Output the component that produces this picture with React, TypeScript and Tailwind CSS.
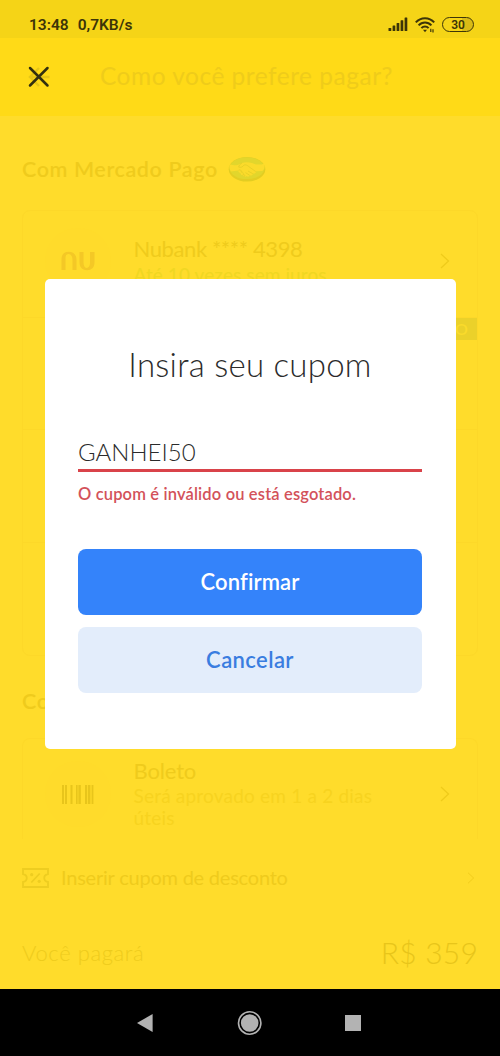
import React from "react";

function Chevron({ className }: { className: string }) {
  return (
    <svg viewBox="0 0 10 16" className={className} fill="none" stroke="currentColor" strokeWidth="1.3">
      <path d="M1 1l7.5 7L1 15" />
    </svg>
  );
}

function StatusBar() {
  return (
    <div className="flex h-[38px] items-center justify-between bg-[#f5d417] pt-[11px] pr-[26px] pl-[29px] font-['Roboto',sans-serif] text-[#3d3508]">
      <div className="flex gap-[9px] text-[15.5px] leading-[18px] font-semibold whitespace-pre">
        <span>13:48</span>
        <span>0,7KB/s</span>
      </div>
      <div className="flex items-center">
        <svg viewBox="0 0 20 15" className="h-[15px] w-[20px]" fill="currentColor">
          <rect x="0.5" y="11" width="2.8" height="3" rx="0.6" />
          <rect x="4.6" y="8.6" width="2.7" height="5.4" rx="0.5" />
          <rect x="8.6" y="6" width="2.7" height="8" rx="0.5" />
          <rect x="12.6" y="3.2" width="2.7" height="10.8" rx="0.5" />
          <rect x="16.6" y="0.4" width="2.7" height="13.6" rx="0.5" />
        </svg>
        <svg viewBox="0 0 20 16" className="ml-[7px] h-[16px] w-[20px]" fill="none" stroke="currentColor" strokeWidth="2">
          <path d="M0.8 5.4C5.8 -0.2 14.2 -0.2 19.2 5.4" />
          <path d="M3.6 8.4C7.2 4.4 12.8 4.4 16.4 8.4" />
          <path d="M6.4 11.2C8.4 8.9 11.6 8.9 13.6 11.2" />
          <path d="M8 12.8h4L10 15.2z" fill="currentColor" stroke="none" />
          <path d="M15.8 11.8v3.2M18 12.2v3.2" strokeWidth="1.2" />
        </svg>
        <div className="ml-[7px] flex h-[15px] w-[32px] items-center justify-center rounded-full border-[1.5px] border-[#3d3508] bg-linear-to-r from-transparent from-65% to-[#d9bb16] to-65% text-[12px] leading-none font-semibold">
          30
        </div>
      </div>
    </div>
  );
}

function Header() {
  return (
    <div className="flex h-[78px] items-center bg-[#ffda17] pl-[28px]">
      <svg viewBox="0 0 22 22" className="h-[22px] w-[22px]" fill="none">
        <path d="M21.5 11H3M11 2L2 11l9 9" stroke="#e6c617" strokeWidth="2.4" />
        <path d="M2 2l17.5 17.5M19.5 2L2 19.5" stroke="#33300f" strokeWidth="2.5" strokeLinecap="round" />
      </svg>
      <h1 className="mb-[2px] ml-[50px] text-[24.5px] leading-[30px] font-normal tracking-[0.5px] whitespace-nowrap text-[#efcc1a]">
        Como você prefere pagar?
      </h1>
    </div>
  );
}

function Handshake() {
  return (
    <svg viewBox="0 0 38 26" className="h-[26px] w-[38px]">
      <ellipse cx="19" cy="13.2" rx="18.3" ry="12.3" fill="#e3cd22" />
      <ellipse cx="19" cy="12.2" rx="17.4" ry="10.9" fill="#e2d62c" />
      <path d="M2 8.5c4 1.4 8 1 12-1.6 3-1 7-.8 10 .2 4 1.9 8 1.9 12 .6 1.2 3 .4 5.4-1.5 7.2L28 15.3c.2 1.6-1.4 2.8-3 2.2 0 1.7-1.7 2.4-3 1.7-.5 1.5-2.3 1.7-3.4.8-1 1.2-3.1.7-3.6-.9-1.6.4-2.6-.8-2.5-2.2-1.5-.2-2.4-1.2-2-2.5l-7.6 1C1.2 13.2.9 11 2 8.5z" fill="#fbdb2b" />
      <path d="M14 6.9c-1.8 1.6-3.4 2.6-3.3 4.2 2.3.8 4.2-.4 5.5-2.2 1.9-.3 3.3.5 4.6 1.7l7 5M20 15l4.8 2.7M17.5 16.6l4.3 2.8M10.5 14.2c1.8-1 3.2.2 2.7 1.9 1.8-.3 2.4.9 1.9 2.5 1.5-.2 2 .5 1.4 2" fill="none" stroke="#e5cd26" strokeWidth="0.8" />
    </svg>
  );
}

function NuLogo() {
  return (
    <svg viewBox="0 0 36 20" className="h-[20px] w-[36px]" fill="#f4c826">
      <path d="M1.5 19V8.5C1.500 3 4.500.8 8.500.8c5 0 8 3 8 8V19h-4V9c0-3.600-1.500-6-4-6-2 0-3 1.500-3 4v12z" />
      <path d="M19.500 1h4v10c0 3.600 1 5.800 3.200 6 2-.1 3.300-2 3.300-5V1h4.500v10.500c0 5-3 7.700-7.300 7.700-4.700 0-7.700-2.700-7.700-8z" />
    </svg>
  );
}

function Barcode() {
  return (
    <svg viewBox="0 0 32 19" className="h-[19px] w-[32px]" fill="#e8c51b">
      <rect x="0" width="2" height="19" />
      <rect x="3" width="2" height="19" />
      <rect x="8.5" width="2" height="19" />
      <rect x="14" width="1.6" height="19" />
      <rect x="16.4" width="2.4" height="19" />
      <rect x="23" width="2.2" height="19" />
      <rect x="26" width="2.4" height="19" />
      <rect x="29.6" width="1.8" height="19" />
    </svg>
  );
}

function Coupon() {
  return (
    <svg viewBox="0 0 27 20" className="h-[20px] w-[27px]" fill="none" stroke="#eecd20" strokeWidth="1.8">
      <path d="M1 1h25v5c-5 1-5 7 0 8v5H1v-5c5-1 5-7 0-8z" />
      <path d="M17.700 5.500l-8.400 9" />
      <circle cx="9.700" cy="6.700" r="1.600" fill="#eecd20" stroke="none" />
      <circle cx="17.200" cy="13.300" r="1.600" fill="#eecd20" stroke="none" />
    </svg>
  );
}

function PaymentPage() {
  return (
    <main className="flex h-[873px] flex-col px-[22px]">
      <div className="flex h-[94px] items-center gap-[10px] pt-[12px]">
        <h2 className="mb-px text-[21.5px] leading-[26px] font-semibold tracking-[0.6px] whitespace-nowrap text-[#efcb1c]">Com Mercado Pago</h2>
        <Handshake />
      </div>
      <section className="flex h-[446px] flex-col rounded-[8px] border border-[#fdd829]">
        <div className="flex h-[107px] shrink-0 items-center border-b border-[#fdd829] pr-[27px] pb-[6px] pl-[22px]">
          <div className="flex h-[66px] w-[66px] items-center justify-center rounded-full bg-[#ffdb2b]">
            <NuLogo />
          </div>
          <div className="ml-[22.5px] flex-1 whitespace-nowrap">
            <p className="text-[22px] leading-[26px] tracking-[-0.4px] text-[#efcb1c]">Nubank **** 4398</p>
            <p className="text-[19px] leading-[25px] tracking-[0.1px] text-[#f0d722]">Até 10 vezes sem juros</p>
          </div>
          <Chevron className="h-[16px] w-[10px] text-[#efcb1b]" />
        </div>
        <div className="flex h-[112px] shrink-0 items-start justify-end border-b border-[#fdd829]">
          <span className="h-[22px] bg-[#ebd12a] px-[9px] text-[16px] leading-[22px] font-semibold text-[#fadb2b]">NOVO</span>
        </div>
        <div className="h-[113px] shrink-0 border-b border-[#fdd829]" />
      </section>
      <h2 className="mt-[32px] text-[21.5px] leading-[26px] font-semibold tracking-[0.6px] text-[#efcb1c]">Com outros meios</h2>
      <section className="mt-[24px] flex h-[101px] items-start rounded-t-[8px] border border-b-0 border-[#fdd829] pt-[19px] pr-[27px] pl-[22px]">
        <div className="mt-[3px] flex h-[66px] w-[66px] items-center justify-center rounded-full bg-[#ffdb2b]">
          <Barcode />
        </div>
        <div className="ml-[22.5px] flex-1 whitespace-nowrap">
          <p className="text-[22px] leading-[26px] tracking-[-0.15px] text-[#efcb1c]">Boleto</p>
          <p className="mt-px text-[19px] leading-[22px] tracking-[0.2px] text-[#f7d31f]">
            Será aprovado em 1 a 2 dias
            <br />
            úteis
          </p>
        </div>
        <Chevron className="mt-[28px] h-[16px] w-[10px] text-[#efcb1b]" />
      </section>
      <div className="mt-[24px] flex h-[30px] items-center">
        <Coupon />
        <span className="mb-[2px] ml-[12px] flex-1 text-[20px] leading-[24px] tracking-[-0.22px] whitespace-nowrap text-[#efcb1c]">Inserir cupom de desconto</span>
        <Chevron className="mr-[3.5px] h-[12px] w-[8px] text-[#f1cc1d]" />
      </div>
      <div className="mt-[37px] flex h-[44px] items-center justify-between whitespace-nowrap">
        <span className="mt-px text-[22px] leading-[28px] font-light tracking-[0.6px] text-[#eecb1c]">Você pagará</span>
        <span className="text-[30px] leading-[36px] font-light tracking-[0.2px] text-[#e8c51a]">R$ 359</span>
      </div>
    </main>
  );
}

function CouponDialog() {
  return (
    <div role="dialog" className="absolute top-[279px] left-[44.5px] flex h-[469.5px] w-[411px] flex-col rounded-[5px] bg-white px-[33.5px] pt-[65px] whitespace-nowrap">
      <h2 className="text-center text-[33px] leading-[40px] font-light tracking-[0.25px] text-[#2b2b2b]">Insira seu cupom</h2>
      <div className="mt-[51px] h-[37px] border-b-[3px] border-[#d9434a] text-[24px] leading-[34px] font-light text-[#2b2b2b]">GANHEI50</div>
      <p className="mt-[10.5px] text-[16.5px] leading-[22px] font-semibold tracking-[0.15px] text-[#d3525a]">O cupom é inválido ou está esgotado.</p>
      <button className="mt-[44.5px] h-[66px] rounded-[8px] bg-[#3483fa] pb-[1px] text-[22px] leading-[26px] font-semibold tracking-[0.1px] text-white">Confirmar</button>
      <button className="mt-[12px] h-[66px] rounded-[8px] bg-[#e3edfb] pb-[1px] text-[22px] leading-[26px] font-semibold tracking-[0.4px] text-[#3a7de0]">Cancelar</button>
    </div>
  );
}

function NavigationBar() {
  return (
    <nav className="flex h-[67px] items-center justify-center bg-black">
      <svg viewBox="0 0 226 26" className="h-[26px] w-[226px]" fill="#b3b3b3">
        <path d="M0 13L15.6 4v18z" />
        <circle cx="112.7" cy="13" r="11.2" fill="none" stroke="#b3b3b3" strokeWidth="1.6" />
        <circle cx="112.7" cy="13" r="8.8" />
        <rect x="208" y="5" width="16" height="16" />
      </svg>
    </nav>
  );
}

export default function App() {
  return (
    <div className="relative h-[1056px] w-[500px] overflow-hidden bg-[#ffdc2b] font-['Lato',sans-serif]">
      <StatusBar />
      <Header />
      <PaymentPage />
      <NavigationBar />
      <CouponDialog />
    </div>
  );
}
